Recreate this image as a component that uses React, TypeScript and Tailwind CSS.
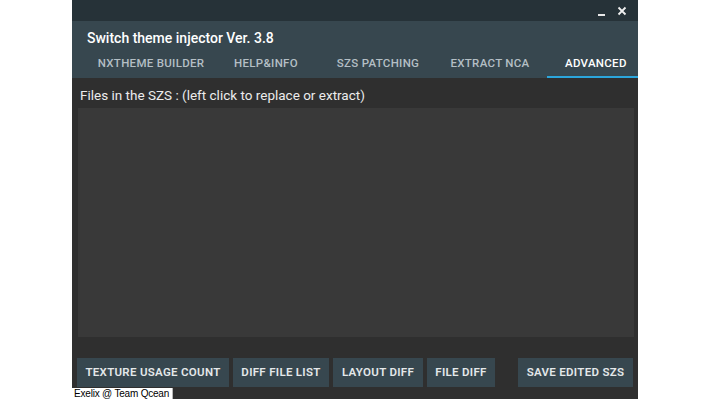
import React from 'react';

const tabs = [
  { name: 'NXTHEME BUILDER', w: 'w-[116px]' },
  { name: 'HELP&INFO', w: 'w-[114px]' },
  { name: 'SZS PATCHING', w: 'w-[110px]' },
  { name: 'EXTRACT NCA', w: 'w-[114px]' },
];

const buttons = [
  { name: 'TEXTURE USAGE COUNT', w: 'w-[152px]' },
  { name: 'DIFF FILE LIST', w: 'w-[96px]' },
  { name: 'LAYOUT DIFF', w: 'w-[90px]' },
  { name: 'FILE DIFF', w: 'w-[68px]' },
];

export default function App() {
  return (
    <div className="w-[710px] h-[399px] bg-white flex overflow-hidden font-['Roboto',sans-serif]">
      <div className="ml-[72px] w-[566px] h-full bg-[#2f2f2f] flex flex-col relative">
        {/* window caption */}
        <div className="h-[21px] bg-[#263238] flex items-center justify-end pr-[11px] gap-[11px]">
          <svg width="9" height="9" viewBox="0 0 9 9" className="mt-[4px]">
            <rect x="1" y="6" width="7" height="2" fill="#e8e8e8" />
          </svg>
          <svg width="10" height="10" viewBox="0 0 10 10">
            <path d="M1.5 1.5 L8.5 8.5 M8.5 1.5 L1.5 8.5" stroke="#f0f0f0" strokeWidth="1.8" />
          </svg>
        </div>

        {/* header */}
        <div className="h-[57px] bg-[#37474f] flex flex-col justify-between">
          <div className="pl-[15px] pt-[9px] text-[14px] leading-[16px] font-medium text-white">
            Switch theme injector Ver. 3.8
          </div>
          <div className="h-[26px] flex pl-[21px]">
            {tabs.map((t) => (
              <div
                key={t.name}
                className={`${t.w} h-full flex items-center justify-center border-b-2 border-transparent text-[11.5px] font-medium tracking-[0.3px] text-[#b4bfc5]`}
              >
                {t.name}
              </div>
            ))}
            <div className="w-[91px] h-full flex items-center pl-[18px] border-b-2 border-[#2ba6dc] text-[11.5px] font-medium tracking-[0.3px] text-white">
              ADVANCED
            </div>
          </div>
        </div>

        {/* content */}
        <div className="flex-1 flex flex-col pl-[6px] pr-[4px]">
          <div className="h-[30px] flex items-center pl-[2px] pt-[4px] text-[13.5px] text-[#ececec]">
            Files in the SZS : (left click to replace or extract)
          </div>
          <div className="h-[229px] bg-[#393939]" />
          <div className="flex gap-[4px] mt-[21px] -ml-[1px]">
            {buttons.map((b) => (
              <div
                key={b.name}
                className={`${b.w} h-[29px] bg-[#37474f] flex items-center justify-center text-[11.5px] font-semibold tracking-[0.3px] text-[#e4e8ea]`}
              >
                {b.name}
              </div>
            ))}
            <div className="w-[115px] h-[29px] ml-[19px] bg-[#37474f] flex items-center justify-center text-[11.5px] font-semibold tracking-[0.3px] text-[#e4e8ea]">
              SAVE EDITED SZS
            </div>
          </div>
        </div>

        {/* status label over the window bottom */}
        <div className="absolute left-0 top-[388px] h-[11px] bg-white border-r border-[#b8b8b8] pl-[2px] pr-[3px] text-[10px] leading-[11px] text-black whitespace-nowrap font-['Liberation_Sans',sans-serif] tracking-[-0.2px]">
          Exelix @ Team Qcean
        </div>
      </div>
    </div>
  );
}
